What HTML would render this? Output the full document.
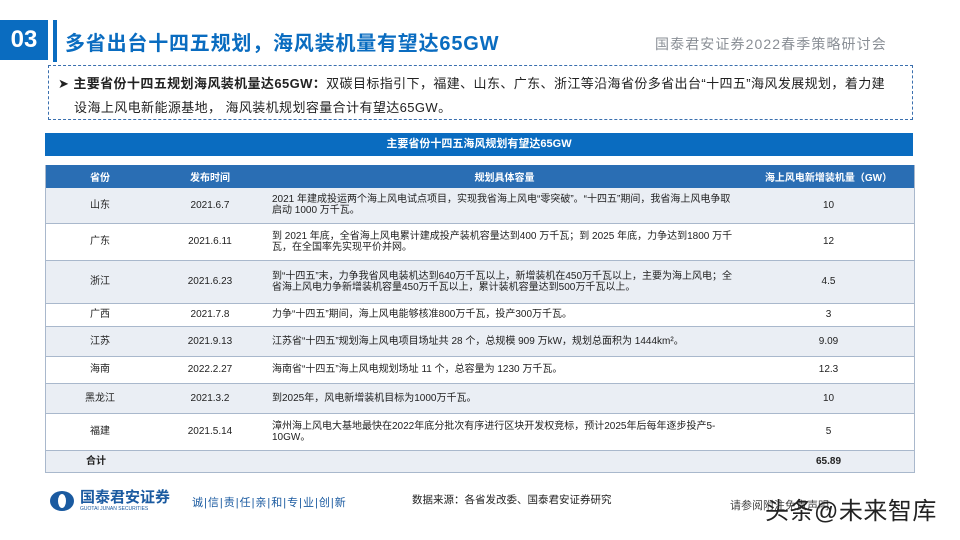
<!DOCTYPE html>
<html><head><meta charset="utf-8"><style>
*{margin:0;padding:0;box-sizing:border-box}
body{width:960px;height:540px;background:#fff;position:relative;overflow:hidden;font-family:"Liberation Sans","Noto Sans CJK SC",sans-serif;color:#222}
.a{position:absolute}
table{border-collapse:collapse;width:868px;font-size:10px;table-layout:fixed}
td{border-bottom:1px solid #a9b8cc;text-align:center;vertical-align:middle;line-height:11px}
tr.g td{background:#eaeef4}
td.c{text-align:left;padding-left:6px;padding-right:4px}
th{background:#2a6eb4;color:#fff;font-weight:bold;font-size:10px;height:23px}
</style></head><body>
<div class="a" style="left:0;top:20px;width:48px;height:40px;background:#0a6cc0;color:#fff;font-weight:bold;font-size:24px;line-height:40px;text-align:center">03</div>
<div class="a" style="left:53px;top:20px;width:4px;height:42px;background:#0a6cc0"></div>
<div class="a" style="left:65px;top:30px;font-size:20px;font-weight:bold;color:#0a6cc0;line-height:28px;letter-spacing:0.8px">多省出台十四五规划，海风装机量有望达65GW</div>
<div class="a" style="left:655px;top:34px;font-size:14px;color:#8a8f96;line-height:20px;letter-spacing:1.1px">国泰君安证券2022春季策略研讨会</div>
<div class="a" style="left:48px;top:65px;width:865px;height:55px;border:1px dashed #3a6fae"></div>
<div class="a" style="left:58px;top:72px;font-size:13px;line-height:24px;width:855px;color:#222;letter-spacing:0.4px;white-space:nowrap">➤ <b>主要省份十四五规划海风装机量达65GW：</b>双碳目标指引下，福建、山东、广东、浙江等沿海省份多省出台“十四五”海风发展规划，着力建<br>&nbsp;&nbsp;&nbsp;&nbsp;设海上风电新能源基地， 海风装机规划容量合计有望达65GW。</div>
<div class="a" style="left:45px;top:133px;width:868px;height:23px;background:#0a6cc0;color:#fff;font-weight:bold;font-size:11px;line-height:23px;text-align:center">主要省份十四五海风规划有望达65GW</div>
<div class="a" style="left:45px;top:165px;border-left:1px solid #a9b8cc;border-right:1px solid #a9b8cc">
<table>
<colgroup><col style="width:108px"><col style="width:112px"><col style="width:477px"><col></colgroup>
<tr><th>省份</th><th>发布时间</th><th>规划具体容量</th><th>海上风电新增装机量（GW）</th></tr>
<tr class="g" style="height:35px"><td>山东</td><td>2021.6.7</td><td class="c">2021 年建成投运两个海上风电试点项目，实现我省海上风电“零突破”。“十四五”期间，我省海上风电争取启动 1000 万千瓦。</td><td>10</td></tr>
<tr style="height:37px"><td>广东</td><td>2021.6.11</td><td class="c">到 2021 年底，全省海上风电累计建成投产装机容量达到400 万千瓦；到 2025 年底，力争达到1800 万千瓦，在全国率先实现平价并网。</td><td>12</td></tr>
<tr class="g" style="height:43px"><td>浙江</td><td>2021.6.23</td><td class="c">到“十四五”末，力争我省风电装机达到640万千瓦以上，新增装机在450万千瓦以上，主要为海上风电；全省海上风电力争新增装机容量450万千瓦以上，累计装机容量达到500万千瓦以上。</td><td>4.5</td></tr>
<tr style="height:23px"><td>广西</td><td>2021.7.8</td><td class="c">力争“十四五”期间，海上风电能够核准800万千瓦，投产300万千瓦。</td><td>3</td></tr>
<tr class="g" style="height:30px"><td>江苏</td><td>2021.9.13</td><td class="c">江苏省“十四五”规划海上风电项目场址共 28 个，总规模 909 万kW，规划总面积为 1444km²。</td><td>9.09</td></tr>
<tr style="height:27px"><td>海南</td><td>2022.2.27</td><td class="c">海南省“十四五”海上风电规划场址 11 个，总容量为 1230 万千瓦。</td><td>12.3</td></tr>
<tr class="g" style="height:30px"><td>黑龙江</td><td>2021.3.2</td><td class="c">到2025年，风电新增装机目标为1000万千瓦。</td><td>10</td></tr>
<tr style="height:37px"><td>福建</td><td>2021.5.14</td><td class="c">漳州海上风电大基地最快在2022年底分批次有序进行区块开发权竞标，预计2025年后每年逐步投产5-10GW。</td><td>5</td></tr>
<tr class="g" style="height:22px"><td style="font-weight:bold;text-align:left;padding-left:40px">合计</td><td></td><td></td><td style="font-weight:bold">65.89</td></tr>
</table></div>
<div class="a" style="left:50px;top:491px;width:24px;height:20px;border-radius:50%;background:#1a5aa0"></div>
<div class="a" style="left:58px;top:494px;width:8px;height:14px;border-radius:50%;background:#fff"></div>
<div class="a" style="left:80px;top:489px;font-size:15px;font-weight:bold;color:#1a5aa0;line-height:18px">国泰君安证券</div>
<div class="a" style="left:80px;top:506px;font-size:5px;color:#1a5aa0">GUOTAI JUNAN SECURITIES</div>
<div class="a" style="left:192px;top:494px;font-size:11px;color:#1a5aa0;letter-spacing:1px">诚|信|责|任|亲|和|专|业|创|新</div>
<div class="a" style="left:412px;top:492px;font-size:10.5px;color:#222">数据来源：各省发改委、国泰君安证券研究</div>
<div class="a" style="left:730px;top:497px;font-size:11px;color:#444">请参阅附注免责声明</div>
<div class="a" style="left:765px;top:498px;font-size:24px;color:#222;line-height:28px;letter-spacing:0.5px">头条@未来智库</div>
</body></html>
